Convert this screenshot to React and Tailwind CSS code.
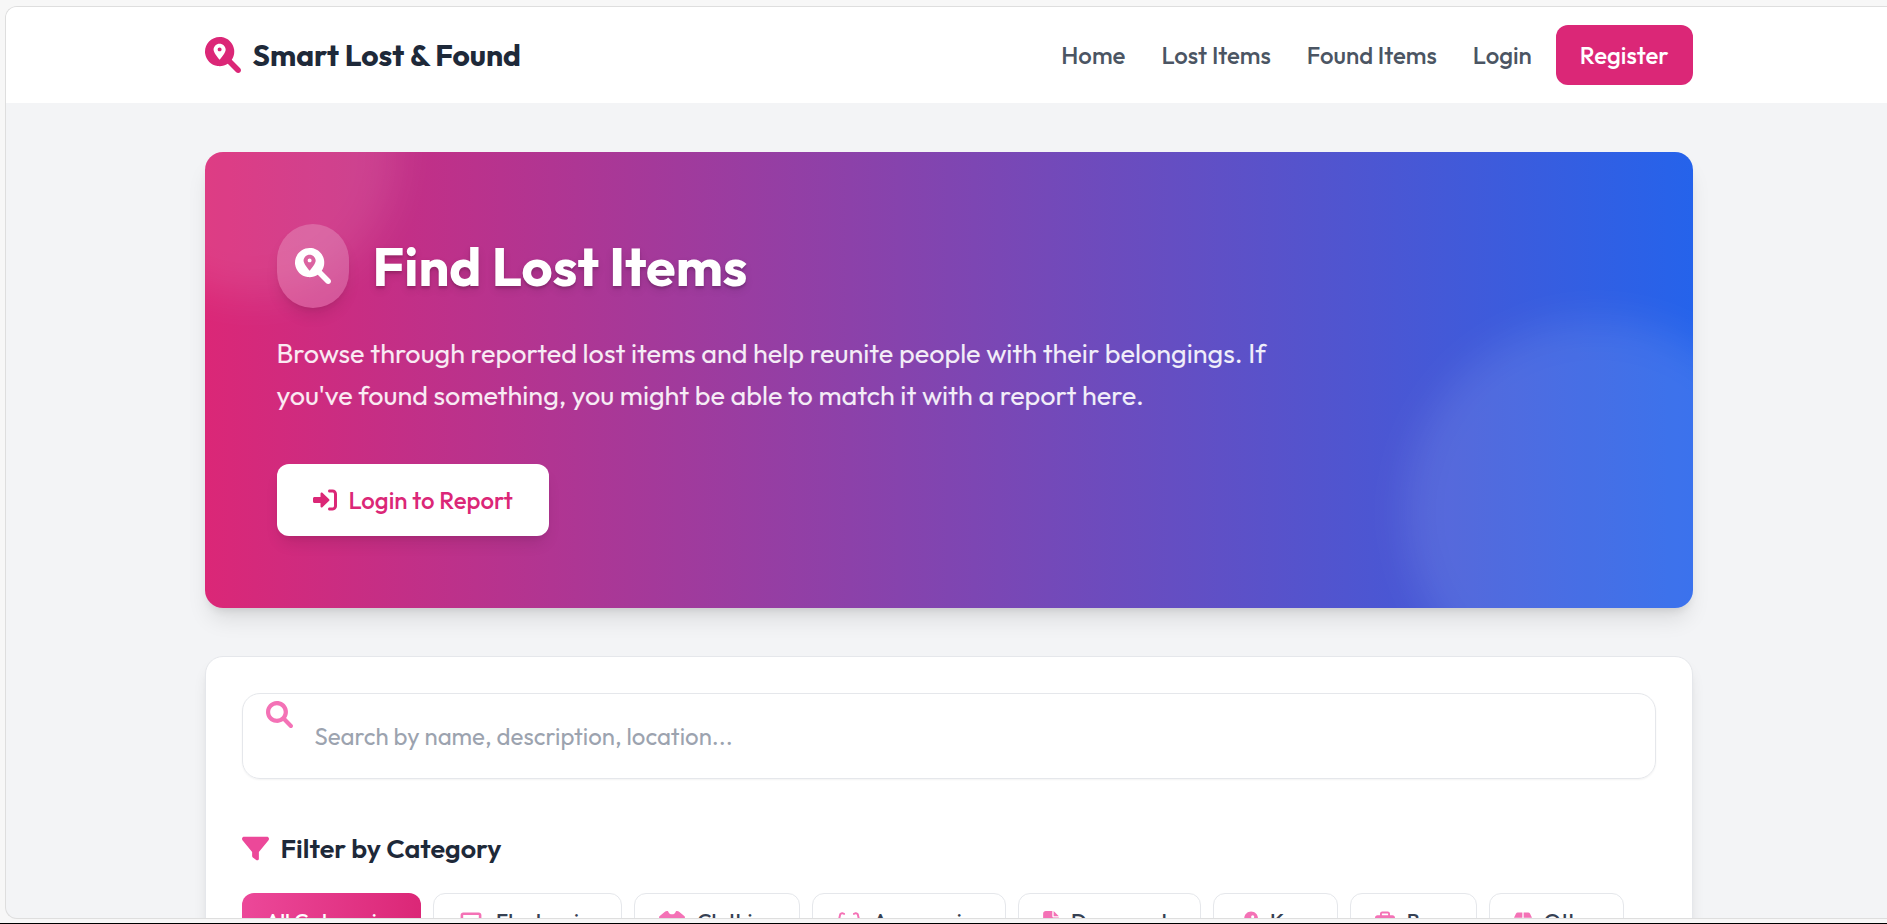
import { FaFilter, FaLaptopCode, FaShirt, FaGlasses, FaFileLines, FaKey, FaBriefcase, FaBox } from "react-icons/fa6";

const categories = [
  { label: "Electronics", Icon: FaLaptopCode, iconWidth: "w-[26px]" },
  { label: "Clothing", Icon: FaShirt, iconWidth: "w-[26px]" },
  { label: "Accessories", Icon: FaGlasses, iconWidth: "w-6" },
  { label: "Documents", Icon: FaFileLines, iconWidth: "w-4" },
  { label: "Keys", Icon: FaKey, iconWidth: "w-5" },
  { label: "Bags", Icon: FaBriefcase, iconWidth: "w-5" },
  { label: "Other", Icon: FaBox, iconWidth: "w-[18px]" },
];

const links = ["Home", "Lost Items", "Found Items", "Login"];

function LocationSearchIcon({ className }) {
  return (
    <svg viewBox="0 0 512 512" fill="currentColor" aria-hidden="true" className={className}>
      <path d="M236 176c0 15.46-12.54 28-28 28S180 191.5 180 176S192.5 148 208 148S236 160.5 236 176zM500.3 500.3c-15.62 15.62-40.95 15.62-56.57 0l-119.7-119.7c-40.41 27.22-90.9 40.65-144.7 33.46c-91.55-12.23-166-87.28-177.6-178.9c-17.24-136.2 97.29-250.7 233.4-233.4c91.64 11.6 166.7 86.07 178.9 177.6c7.19 53.8-6.236 104.3-33.46 144.7l119.7 119.7C515.9 459.3 515.9 484.7 500.3 500.3zM294.1 182.2C294.1 134.5 255.6 96 207.1 96C160.4 96 121.9 134.5 121.9 182.2c0 38.35 56.29 108.5 77.87 134C201.8 318.5 204.7 320 207.1 320c3.207 0 6.26-1.459 8.303-3.791C237.8 290.7 294.1 220.5 294.1 182.2z" />
    </svg>
  );
}

function SearchIcon({ className }) {
  return (
    <svg viewBox="0 0 512 512" fill="currentColor" aria-hidden="true" className={className}>
      <path d="M500.3 443.7l-119.7-119.7c27.22-40.41 40.65-90.9 33.46-144.7c-12.23-91.55-87.28-166-178.9-177.6c-136.2-17.24-250.7 97.28-233.4 233.4c11.6 91.64 86.07 166.7 177.6 178.9c53.81 7.191 104.3-6.235 144.7-33.46l119.7 119.7c15.62 15.62 40.95 15.62 56.57 0C515.9 484.7 515.9 459.3 500.3 443.7zM79.1 208c0-70.58 57.42-128 128-128s128 57.42 128 128c0 70.58-57.42 128-128 128S79.1 278.6 79.1 208z" />
    </svg>
  );
}

function LoginIcon({ className }) {
  return (
    <svg viewBox="0 0 512 512" fill="currentColor" aria-hidden="true" className={className}>
      <path d="M344.7 238.5l-144.1-136C193.7 95.97 183.4 94.17 174.6 97.95C165.8 101.8 160.1 110.4 160.1 120V192H32.02C14.33 192 0 206.3 0 224v64c0 17.68 14.34 32 32.02 32h128.1v72c0 9.578 5.707 18.25 14.51 22.05c8.803 3.781 19.03 1.984 26-4.594l144.1-136C354.3 264.4 354.3 247.6 344.7 238.5zM416 32h-64c-17.67 0-32 14.33-32 32s14.33 32 32 32h64c17.67 0 32 14.33 32 32v256c0 17.67-14.33 32-32 32h-64c-17.67 0-32 14.33-32 32s14.33 32 32 32h64c53.02 0 96-42.98 96-96V128C512 74.98 469 32 416 32z" />
    </svg>
  );
}

function Header() {
  return (
    <header className="border-b border-gray-100 bg-white pl-1">
      <div className="mx-auto flex h-24 max-w-[1488px] items-center justify-between">
        <a href="#" className="flex items-center gap-3 text-[30px] font-bold text-gray-800">
          <LocationSearchIcon className="size-9 text-[#db2777]" />
          Smart Lost &amp; Found
        </a>
        <nav className="flex items-center gap-6 text-2xl font-medium">
          <div className="flex gap-9 text-[#4b5563]">
            {links.map((l) => (
              <a key={l} href="#">{l}</a>
            ))}
          </div>
          <a href="#" className="flex h-15 items-center rounded-xl bg-[#db2777] px-6 text-white">
            Register
          </a>
        </nav>
      </div>
    </header>
  );
}

function Hero() {
  return (
    <section className="relative overflow-hidden rounded-[18px] bg-linear-to-r/srgb from-[#db2777] to-[#2563eb] p-18 shadow-[0_15px_22px_-4px_rgb(0_0_0/0.1),0_6px_9px_-4px_rgb(0_0_0/0.1)]">
      <div className="absolute -left-24 -top-36 size-72 rounded-full bg-white/10 blur-[20px]" />
      <div className="absolute -bottom-24 -right-24 size-96 rounded-full bg-white/10 blur-[20px]" />
      <div className="relative flex flex-col items-start">
        <div className="flex items-center gap-6">
          <div className="flex h-21 w-18 items-center justify-center rounded-full bg-white/20 shadow-lg">
            <LocationSearchIcon className="size-9 text-white" />
          </div>
          <h1 className="text-[54px] font-bold leading-15 text-white text-shadow-lg">Find Lost Items</h1>
        </div>
        <p className="mt-6 max-w-[1008px] text-[27px] leading-[42px] text-white/90">
          Browse through reported lost items and help reunite people with their belongings. If you've found something, you might be able to match it with a report here.
        </p>
        <a href="#" className="mt-12 flex h-18 items-center gap-3 rounded-xl bg-white px-9 text-2xl font-medium text-[#db2777] shadow-lg">
          <LoginIcon className="size-6" />
          Login to Report
        </a>
      </div>
    </section>
  );
}

function Filters() {
  return (
    <section className="rounded-[18px] border border-gray-200 bg-white p-9 shadow-lg">
      <div className="relative">
        <label htmlFor="search" className="absolute left-6 top-2">
          <SearchIcon className="size-[27px] text-[#f472b6]" />
          <span className="sr-only">Search items</span>
        </label>
        <input
          id="search"
          type="text"
          placeholder="Search by name, description, location..."
          className="h-[86px] w-full rounded-[18px] border border-gray-200 pl-[72px] pr-6 text-2xl shadow-xs placeholder:text-[#9ca3af]"
        />
      </div>
      <h2 className="mt-12 flex items-center gap-3 text-[27px] font-semibold leading-[42px] text-gray-800">
        <FaFilter className="size-[27px] text-[#ec4899]" />
        Filter by Category
      </h2>
      <div className="mt-6 flex flex-wrap gap-3 text-[21px] font-medium">
        <button type="button" className="h-14 rounded-xl bg-linear-to-r/srgb from-[#ec4899] to-[#db2777] px-6 text-white">
          All Categories
        </button>
        {categories.map(({ label, Icon, iconWidth }) => (
          <button key={label} type="button" className="flex h-14 items-center gap-3 rounded-xl border border-gray-200 bg-white pl-6 pr-[23px] text-gray-700">
            <Icon className={`h-[21px] shrink-0 text-[#f472b6] ${iconWidth}`} />
            {label}
          </button>
        ))}
      </div>
    </section>
  );
}

export default function App() {
  return (
    <div className="h-screen overflow-hidden border-b border-black bg-[#f7f7f7] pb-1 pl-[5px] pt-1.5 font-['Outfit','Lato',sans-serif]">
      <div className="h-full overflow-hidden rounded-l-xl border-y border-l border-[#dedede] bg-[#f3f4f6]">
        <Header />
        <main className="pl-1 pt-12">
          <div className="mx-auto flex max-w-[1488px] flex-col gap-12">
            <Hero />
            <Filters />
          </div>
        </main>
      </div>
    </div>
  );
}
